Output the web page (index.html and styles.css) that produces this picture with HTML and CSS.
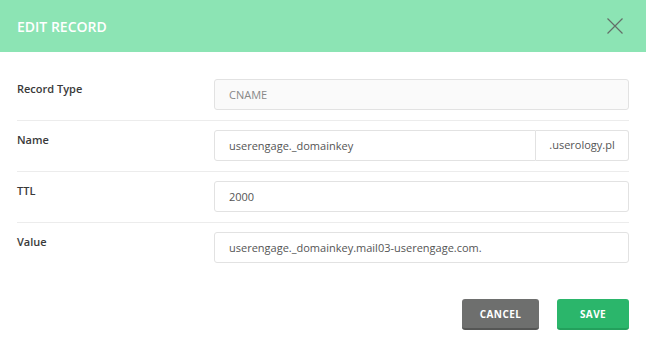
FILE: index.html
```html
<!DOCTYPE html>
<html lang="en">

<head>
    <meta charset="UTF-8">
    <meta name="viewport" content="width=device-width, initial-scale=1.0">
    <title>Edit Record</title>
    <link rel="stylesheet" href="styles.css">
</head>

<body>

    <div class="modal">

        <!-- Header -->
        <header class="modal-header">
            <h1>Edit Record</h1>
            <button class="close" aria-label="Close">
                <svg width="16" height="16" viewBox="0 0 16 16">
                    <path d="M0.5 0.5 L15.5 15.5 M15.5 0.5 L0.5 15.5" stroke="#646e68" stroke-width="1.2" fill="none" />
                </svg>
            </button>
        </header>

        <!-- Form -->
        <form class="modal-body">
            <div class="form-row">
                <label>Record Type</label>
                <input class="input" type="text" value="CNAME" disabled>
            </div>

            <div class="form-row">
                <label>Name</label>
                <div class="input-group">
                    <input class="input" type="text" value="userengage._domainkey">
                    <span class="addon">.userology.pl</span>
                </div>
            </div>

            <div class="form-row">
                <label>TTL</label>
                <input class="input" type="text" value="2000">
            </div>

            <div class="form-row">
                <label>Value</label>
                <input class="input" type="text" value="userengage._domainkey.mail03-userengage.com.">
            </div>
        </form>

        <!-- Footer -->
        <footer class="modal-footer">
            <button class="btn btn-cancel">Cancel</button>
            <button class="btn btn-save">Save</button>
        </footer>

    </div>

</body>

</html>
```

FILE: styles.css
```css
body {
    font-family: "Open Sans", Arial, sans-serif;
    margin: 0;
    padding: 0;
    background-color: white;
    color: #333;
}

.modal {
    width: 646px;
    height: 338px;
    background-color: white;
}

.modal-header {
    background-color: #8ce4b4;
    height: 52px;
    padding: 0 17px;
    display: flex;
    align-items: center;
    justify-content: space-between;
    box-sizing: border-box;
}

.modal-header h1 {
    margin: 0;
    color: white;
    font-size: 14px;
    font-weight: 600;
    text-transform: uppercase;
}

.close {
    background: none;
    border: none;
    padding: 0;
    margin-right: 6px;
    width: 16px;
    height: 16px;
    display: flex;
}

.modal-body {
    padding: 18px 17px 0;
    margin: 0;
}

.form-row {
    display: flex;
    align-items: flex-start;
    padding: 9px 0 10px;
    border-bottom: 1px solid #ececec;
}

.form-row:last-child {
    border-bottom: none;
}

.form-row label {
    width: 197px;
    flex-shrink: 0;
    font-size: 11px;
    font-weight: 600;
    line-height: 16px;
    padding-top: 2px;
    color: #3a3a3a;
}

.input {
    flex: 1;
    min-width: 0;
    height: 31px;
    box-sizing: border-box;
    border: 1px solid #e2e2e2;
    border-radius: 3px;
    padding: 0 14px;
    font-family: "Open Sans", Arial, sans-serif;
    font-size: 11px;
    color: #555;
    background-color: white;
    outline: none;
}

.input:disabled {
    background-color: #fafafa;
    color: #888;
}

.input-group {
    flex: 1;
    display: flex;
}

.input-group .input {
    border-radius: 3px 0 0 3px;
}

.addon {
    width: 93px;
    height: 31px;
    box-sizing: border-box;
    border: 1px solid #e2e2e2;
    border-left: none;
    border-radius: 0 3px 3px 0;
    padding: 0 10px;
    font-size: 11px;
    color: #555;
    line-height: 27px;
    text-align: center;
    background-color: white;
}

.modal-footer {
    display: flex;
    justify-content: flex-end;
    gap: 18px;
    padding: 26px 17px 0;
}

.btn {
    height: 31px;
    border: none;
    border-radius: 3px;
    color: white;
    font-family: "Open Sans", Arial, sans-serif;
    font-size: 10px;
    font-weight: 700;
    text-transform: uppercase;
    letter-spacing: 0.4px;
    padding: 0;
    box-sizing: border-box;
}

.btn-cancel {
    width: 77px;
    background-color: #6e6f6e;
    border-bottom: 2px solid #555655;
}

.btn-save {
    width: 72px;
    background-color: #2bb66b;
    border-bottom: 2px solid #23a05c;
}
```
